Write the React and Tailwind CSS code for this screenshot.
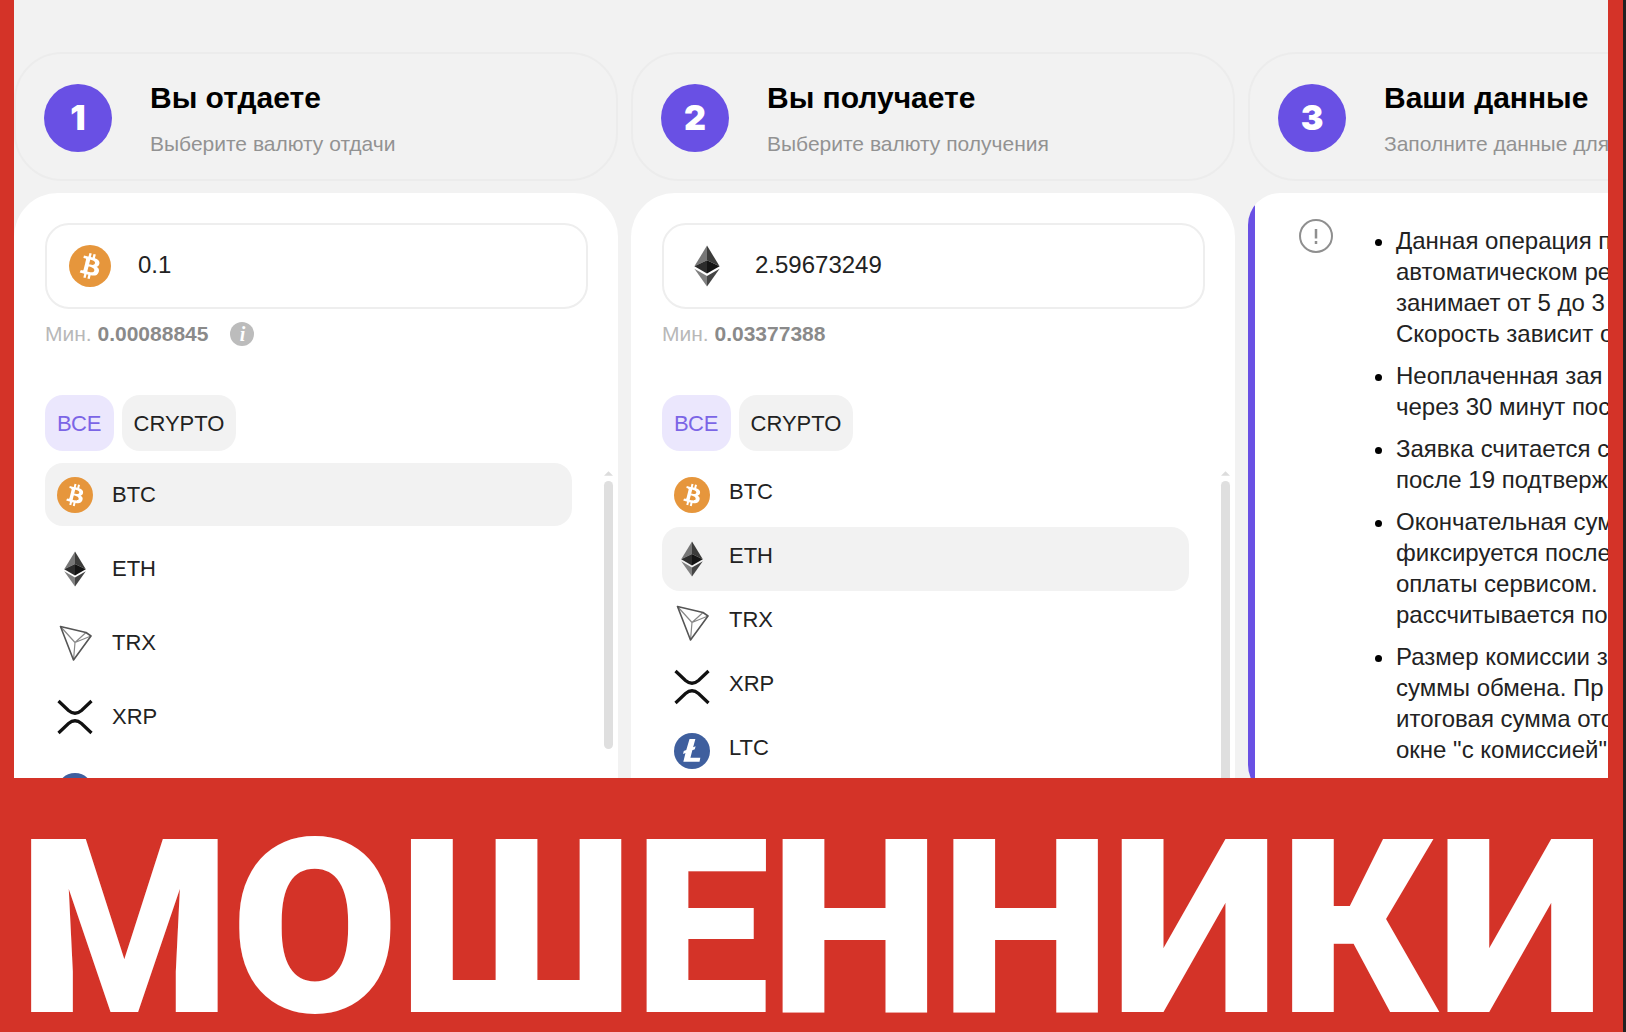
import React, { useState } from 'react';

// ─── Page data ───────────────────────────────────────────────────────────────
const COINS = ['BTC', 'ETH', 'TRX', 'XRP', 'LTC'];

const NOTES = [
  ['Данная операция п', 'автоматическом ре', 'занимает от 5 до 3', 'Скорость зависит о'],
  ['Неоплаченная зая', 'через 30 минут пос'],
  ['Заявка считается с', 'после 19 подтверж'],
  ['Окончательная сум', 'фиксируется после', 'оплаты сервисом.', 'рассчитывается по'],
  ['Размер комиссии з', 'суммы обмена. Пр', 'итоговая сумма ото', 'окне "с комиссией"'],
];

// ─── Coin logos ──────────────────────────────────────────────────────────────
function CoinIcon({ coin, className }) {
  if (coin === 'BTC') {
    return (
      <svg viewBox="0 0 32 32" className={className} aria-hidden="true">
        <circle cx="16" cy="16" r="16" fill="#e6963c" />
        <path
          fill="#fff"
          d="M23.189 14.02c.314-2.096-1.283-3.223-3.465-3.975l.708-2.84-1.728-.43-.69 2.765c-.454-.114-.92-.22-1.385-.326l.695-2.783L15.596 6l-.708 2.839c-.376-.086-.746-.17-1.104-.26l.002-.009-2.384-.595-.46 1.846s1.283.294 1.256.312c.7.175.826.638.805 1.006l-.806 3.235c.048.012.11.03.18.057l-.183-.045-1.13 4.532c-.086.212-.303.531-.793.41.018.025-1.256-.313-1.256-.313l-.858 1.978 2.25.561c.418.105.828.215 1.231.318l-.715 2.872 1.727.43.708-2.84c.472.127.93.245 1.378.357l-.706 2.828 1.728.43.715-2.866c2.948.558 5.164.333 6.097-2.333.752-2.146-.037-3.385-1.588-4.192 1.13-.26 1.98-1.003 2.207-2.538zm-3.95 5.538c-.533 2.147-4.148.986-5.32.695l.95-3.805c1.172.293 4.929.872 4.37 3.11zm.535-5.569c-.487 1.953-3.495.96-4.47.717l.86-3.45c.975.243 4.118.696 3.61 2.733z"
        />
      </svg>
    );
  }
  if (coin === 'ETH') {
    return (
      <svg viewBox="0 0 36 36" className={className} aria-hidden="true">
        <path fill="#777" d="M18 0.500 7.200 18.300 18 13z" />
        <path fill="#3c3c3b" d="M18 0.500v12.500l10.800 5.300z" />
        <path fill="#2c2c2c" d="M7.200 18.300 18 24.500V13z" />
        <path fill="#141414" d="M28.800 18.300 18 24.500V13z" />
        <path fill="#808080" d="M7.200 20.300 18 35.500v-8.900z" />
        <path fill="#444" d="M28.800 20.300 18 35.500v-8.900z" />
      </svg>
    );
  }
  if (coin === 'TRX') {
    return (
      <svg viewBox="0 0 36 36" className={className} aria-hidden="true" fill="none" strokeLinejoin="round">
        <path stroke="#888" strokeWidth="1.200" d="M3.500 1.500 18 17.500 34 11M18 17.500 16.500 35M18 17.500 29 7.500" />
        <path stroke="#555" strokeWidth="1.600" d="M3.500 1.500 29 7.500 34 11 16.500 35z" />
      </svg>
    );
  }
  if (coin === 'XRP') {
    return (
      <svg viewBox="0 0 36 36" className={className} aria-hidden="true" fill="none" stroke="#111" strokeWidth="3.200">
        <path d="M1.500 2 11.500 11.500Q18 17 24.500 11.500L34.500 2" />
        <path d="M1.500 34 11.500 24.500Q18 19 24.500 24.500L34.500 34" />
      </svg>
    );
  }
  return (
    <svg viewBox="0 0 32 32" className={className} aria-hidden="true">
      <circle cx="16" cy="16" r="16" fill="#3f5f9e" />
      <path
        fill="#fff"
        d="M10.200 17.800 8 18.700l.7-2.700 2.200-.9L13.800 5.400h5.200l-2 7.200 2.200-.9-.7 2.700-2.200.9-1.700 6.700h8.800L22.700 25.600H8.300z"
      />
    </svg>
  );
}

// ─── Step header ─────────────────────────────────────────────────────────────
function StepHeader({ step, title, subtitle }) {
  return (
    <header className="flex h-[129px] items-center rounded-[48px] border-2 border-[#ececec] pt-[2px] pl-7 whitespace-nowrap">
      <span className="mr-[38px] flex size-[68px] shrink-0 items-center justify-center rounded-full bg-[#6950e4] font-[Inter,sans-serif] text-[34px] font-black text-white">
        {step}
      </span>
      <div>
        <h2 className="text-[30px] leading-9 font-bold text-black">{title}</h2>
        <p className="mt-4 text-[21px] leading-6 text-[#929292]">{subtitle}</p>
      </div>
    </header>
  );
}

// ─── Currency column ─────────────────────────────────────────────────────────
function ExchangeColumn({ id, step, title, subtitle, initialCoin, amount, min, hint, compact }) {
  const [coin, setCoin] = useState(initialCoin);
  const [value, setValue] = useState(amount);
  const [tab, setTab] = useState('ВСЕ');

  return (
    <section className="flex flex-col gap-3">
      <StepHeader step={step} title={title} subtitle={subtitle} />

      <div className="flex-1 rounded-t-[44px] bg-white pt-[30px] pl-[31px]">
        <div className="mr-[30px] flex h-[86px] items-center rounded-3xl border-2 border-[#eeeeee] pl-[22px]">
          <CoinIcon coin={coin} className="size-[42px] shrink-0" />
          <input
            id={`amount-${id}`}
            aria-label={title}
            value={value}
            onChange={(e) => setValue(e.target.value)}
            className="ml-[27px] w-full min-w-0 bg-transparent pb-[2px] text-2xl text-[#222] outline-none"
          />
        </div>

        <div className="mt-[9px] flex h-8 items-center text-[21px] text-[#b8b8b8]">
          <label htmlFor={`amount-${id}`}>
            Мин. <b className="text-[#8a8a8a]">{min}</b>
          </label>
          {hint && (
            <button
              type="button"
              aria-label="Информация"
              className="ml-[22px] flex size-6 items-center justify-center rounded-full bg-[#bcbcbc] font-['Liberation_Serif',serif] text-xl leading-none font-bold text-white italic"
            >
              i
            </button>
          )}
        </div>

        <div className="mt-[45px] flex gap-2 text-[22px]">
          {['ВСЕ', 'CRYPTO'].map((name) => (
            <button
              key={name}
              type="button"
              onClick={() => setTab(name)}
              className={`h-14 rounded-[18px] px-3 ${
                tab === name ? 'bg-[#ebe7fd] text-[#7b65e6]' : 'bg-[#f2f2f2] text-[#222]'
              }`}
            >
              {name}
            </button>
          ))}
        </div>

        <div className="mt-3 flex pr-[5px]">
          <ul className={`flex flex-1 flex-col ${compact ? 'gap-0' : 'gap-[11px]'}`}>
            {COINS.map((name) => (
              <li key={name}>
                <button
                  type="button"
                  onClick={() => setCoin(name)}
                  className={`flex w-full items-center rounded-[18px] pl-3 text-left text-[22px] text-[#222] ${
                    compact ? 'h-16' : 'h-[63px]'
                  } ${coin === name ? 'bg-[#f2f2f2]' : ''}`}
                >
                  <CoinIcon coin={name} className="size-9 shrink-0" />
                  <span className={`ml-[19px] ${compact ? 'pb-2' : ''}`}>{name}</span>
                </button>
              </li>
            ))}
          </ul>
          {/* scroll track */}
          <div className="ml-8 flex w-[9px] flex-col items-center gap-[5px] pt-[8px]">
            <svg viewBox="0 0 10 5" className="h-[5px] w-[9px]" aria-hidden="true">
              <path fill="#dcdcdc" d="M5 0 10 5H0z" />
            </svg>
            <span className={`w-full rounded-full bg-[#dfdfdf] ${compact ? 'h-96' : 'h-[268px]'}`} />
          </div>
        </div>
      </div>
    </section>
  );
}

// ─── Notes column ────────────────────────────────────────────────────────────
function NotesColumn() {
  return (
    <section className="flex flex-col gap-3">
      <StepHeader step="3" title="Ваши данные" subtitle="Заполните данные для" />
      <div className="flex overflow-hidden rounded-[32px] bg-white">
        <div className="w-[7px] shrink-0 bg-[#6950e4]" />
        <div className="flex items-start pt-[26px] pb-8 pl-[44px]">
          <svg viewBox="0 0 34 34" className="size-[34px] shrink-0" aria-hidden="true" fill="none" stroke="#8f8f8f" strokeWidth="2">
            <circle cx="17" cy="17" r="16" />
            <path strokeWidth="2.500" d="M17 10v9.500M17 22v3" />
          </svg>
          <ul className="mt-[6px] ml-[63px] flex list-outside list-disc flex-col gap-[11px] text-2xl leading-[31px] whitespace-nowrap text-[#222] marker:text-black">
            {NOTES.map((lines) => (
              <li key={lines[0]}>
                {lines.map((line) => (
                  <span key={line} className="block">
                    {line}
                  </span>
                ))}
              </li>
            ))}
          </ul>
        </div>
      </div>
    </section>
  );
}

export default function App() {
  return (
    <div className="h-screen bg-[#222] pr-[3px] font-['Liberation_Sans',Arial,sans-serif]">
      <div className="flex h-full flex-col overflow-hidden bg-[#d43328]">
        <main className="mr-[15px] ml-[14px] min-h-0 flex-1 overflow-hidden bg-[#f2f2f2] pt-[52px]">
          <div className="grid w-[calc(100%+244px)] grid-cols-3 gap-[13px]">
            <ExchangeColumn
              id="give"
              step="1"
              title="Вы отдаете"
              subtitle="Выберите валюту отдачи"
              initialCoin="BTC"
              amount="0.1"
              min="0.00088845"
              hint
            />
            <ExchangeColumn
              id="get"
              step="2"
              title="Вы получаете"
              subtitle="Выберите валюту получения"
              initialCoin="ETH"
              amount="2.59673249"
              min="0.03377388"
              compact
            />
            <NotesColumn />
          </div>
        </main>

        <h1 className="flex h-[254px] shrink-0 items-center justify-center pt-12 font-[Roboto,sans-serif] text-[243px] leading-none font-black text-white">
          МОШЕННИКИ
        </h1>
      </div>
    </div>
  );
}
